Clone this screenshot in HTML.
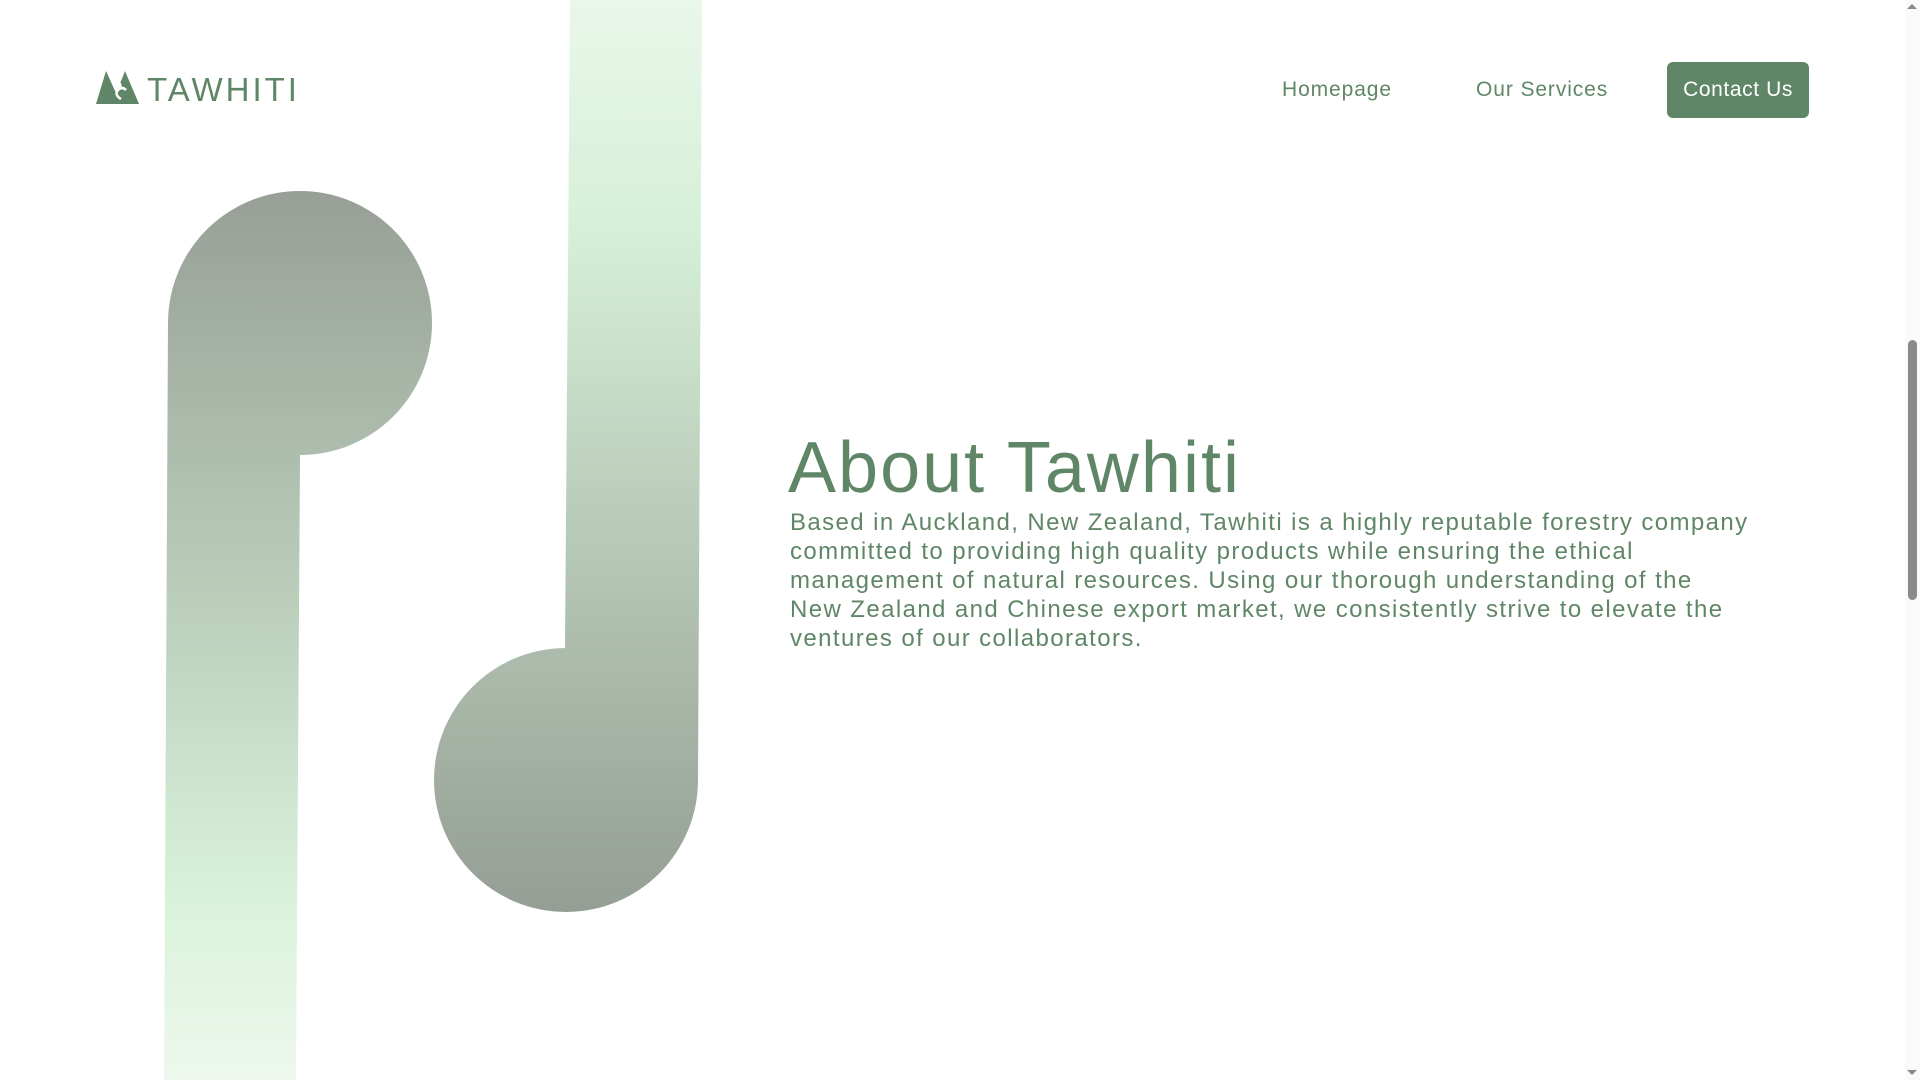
<!DOCTYPE html>
<html><head><meta charset="utf-8"><style>
html,body{margin:0;padding:0;width:1920px;height:1080px;overflow:hidden;background:#fff;font-family:"Liberation Sans",sans-serif;color:#5f8666}
.abs{position:absolute}
.nav{position:absolute;top:78px;font-size:21px;color:#5f8666;letter-spacing:0.9px}
.btn{position:absolute;left:1667px;top:62px;width:142px;height:56px;background:#5f8666;border-radius:6px;color:#fff;font-size:21px;letter-spacing:0.6px;display:flex;align-items:center;justify-content:center}
h1{position:absolute;left:788px;top:428px;margin:0;font-weight:normal;font-size:72px;line-height:80px;letter-spacing:2px;color:#5f8666}
p{position:absolute;left:790px;top:508px;margin:0;white-space:nowrap;font-size:24px;line-height:29px;letter-spacing:1.4px;color:#5f8666}
.sb{position:absolute;left:1905px;top:0;width:15px;height:1080px;background:#fafafa}
.th{position:absolute;left:1908px;top:340px;width:9px;height:260px;background:#8a8a8a;border-radius:5px}
</style></head><body>
<svg class="abs" style="left:0;top:0" width="1920" height="1080">
<defs>
<linearGradient id="g1" gradientUnits="userSpaceOnUse" x1="0" y1="191" x2="0" y2="1080">
<stop offset="0" stop-color="#989f97"/><stop offset="0.4" stop-color="#b5c8b5"/><stop offset="0.8" stop-color="#d9f2da"/><stop offset="1" stop-color="#eef8ee"/></linearGradient>
<linearGradient id="g2" gradientUnits="userSpaceOnUse" x1="0" y1="0" x2="0" y2="911">
<stop offset="0" stop-color="#e9f7ea"/><stop offset="0.25" stop-color="#d6f0d8"/><stop offset="0.6" stop-color="#b6c8b6"/><stop offset="1" stop-color="#959e95"/></linearGradient>
</defs>
<path d="M164,1080 L168,323 A132,132 0 1 1 300,455 L296,1080 Z" fill="url(#g1)"/>
<path d="M570,0 L702,0 L698,780 A132,132 0 1 1 565,648 Z" fill="url(#g2)"/>
<g fill="#5f8666">
<polygon points="96,104 106,71 121,104"/>
<polygon points="112,104 125,71 139,104"/>
</g>
<path d="M121,99 q-7,-4 -3,-9 q4,-4 8,0 M118,82 q4,3 1,7" stroke="#fff" stroke-width="2.5" fill="none"/>
</svg>
<div class="abs" style="left:147px;top:72px;font-size:33px;letter-spacing:3px;line-height:36px;color:#5f8666">TAWHITI</div>
<div class="nav" style="left:1282px">Homepage</div>
<div class="nav" style="left:1476px">Our Services</div>
<div class="btn">Contact Us</div>
<h1>About Tawhiti</h1>
<p>Based in Auckland, New Zealand, Tawhiti is a highly reputable forestry company<br>committed to providing high quality products while ensuring the ethical<br>management of natural resources. Using our thorough understanding of the<br>New Zealand and Chinese export market, we consistently strive to elevate the<br>ventures of our collaborators.</p>
<div class="sb"></div><div class="th"></div>
<div class="abs" style="left:1907px;top:4px;width:0;height:0;border-left:5px solid transparent;border-right:5px solid transparent;border-bottom:5px solid #888"></div>
<div class="abs" style="left:1907px;top:1070px;width:0;height:0;border-left:5px solid transparent;border-right:5px solid transparent;border-top:5px solid #888"></div>
</body></html>
